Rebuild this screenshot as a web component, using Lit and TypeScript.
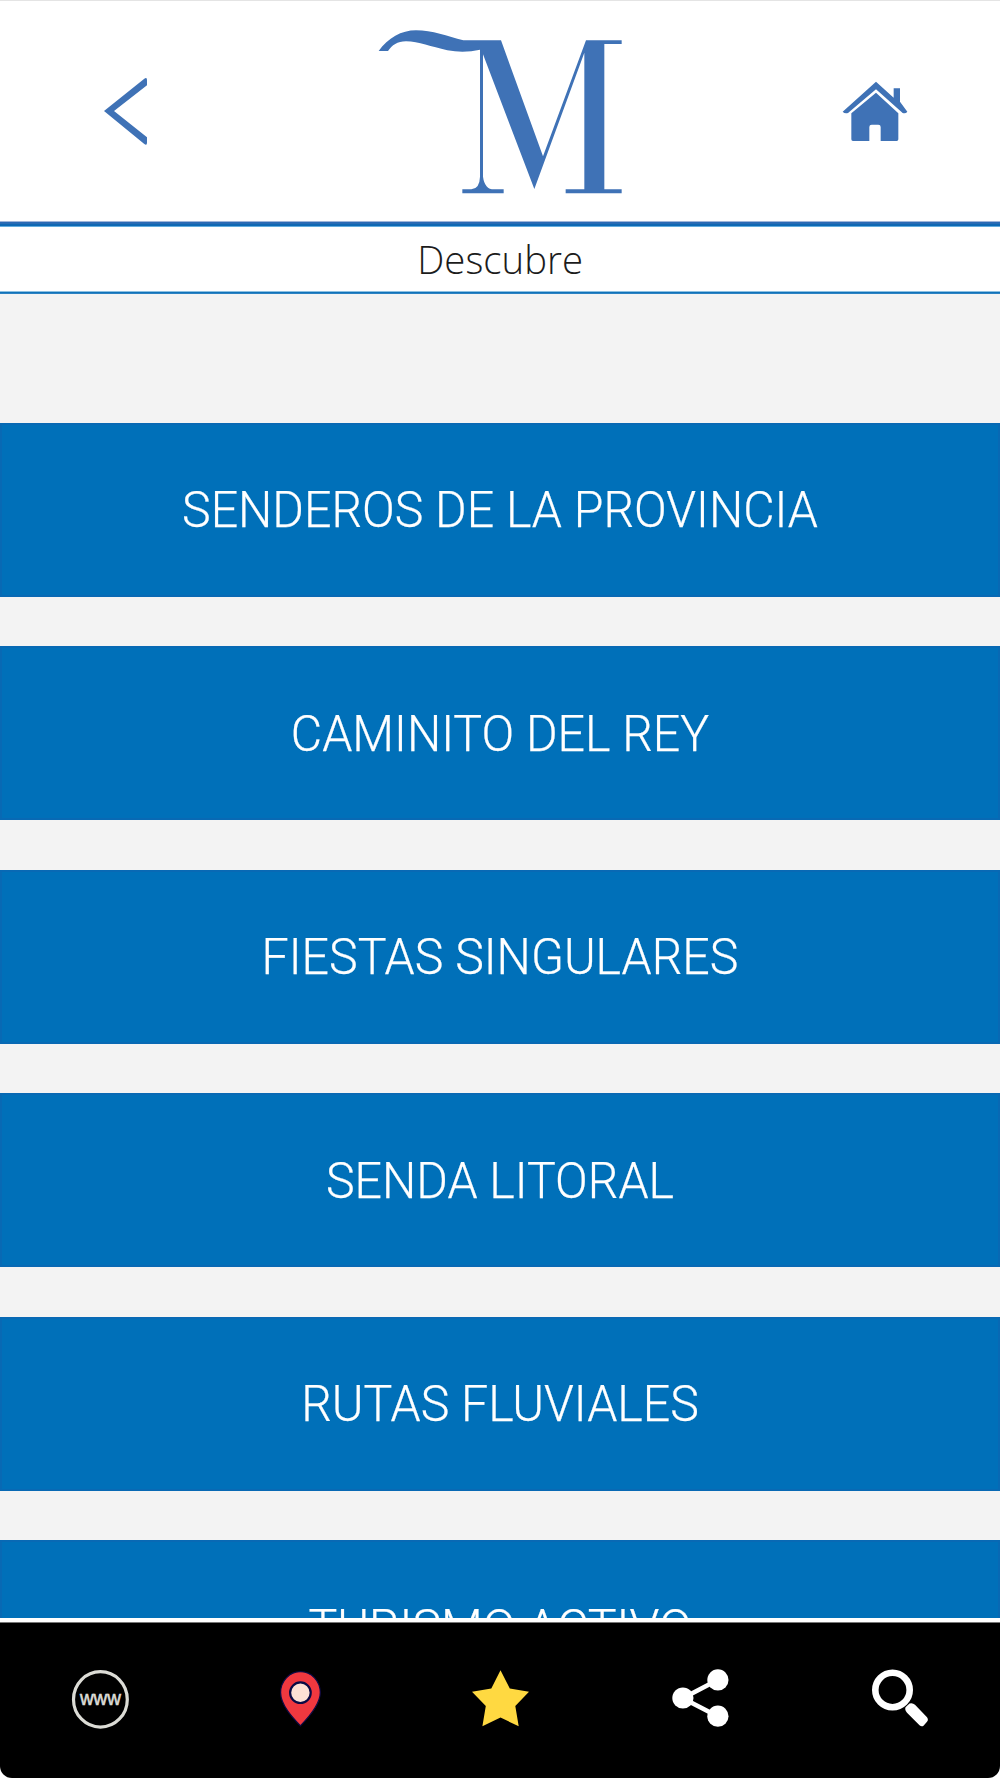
import { LitElement, html, css, svg } from "lit";
import { customElement } from "lit/decorators.js";

const SECTIONS = [
  "SENDEROS DE LA PROVINCIA",
  "CAMINITO DEL REY",
  "FIESTAS SINGULARES",
  "SENDA LITORAL",
  "RUTAS FLUVIALES",
  "TURISMO ACTIVO",
];

@customElement("app-header")
class AppHeader extends LitElement {
  static styles = css`
    :host {
      display: block;
    }
    .bar {
      box-sizing: border-box;
      height: 221px;
      display: grid;
      grid-template-columns: 1fr 2fr 1fr;
      justify-items: center;
      align-items: center;
      border-top: 1px solid #e4e4e4;
      padding-bottom: 2px;
      background: #fff;
    }
    svg {
      display: block;
      fill: #3f72b6;
    }
    .title {
      box-sizing: border-box;
      height: 73px;
      margin: 0;
      padding-bottom: 1px;
      display: flex;
      justify-content: center;
      align-items: center;
      border-top: 6px solid #1e6bb5;
      border-image: linear-gradient(#9fb5da 0 1px, #2a6bb5 1px 3px, #0f69b4 3px 5px, #64addf 5px 6px) 6 0 0 0;
      background: #fff;
      color: #1c1c1c;
      font: 300 39.4px/1 "Open Sans", sans-serif;
    }
    .label {
      display: block;
      transform: scaleX(0.974);
    }
    .rule {
      height: 3px;
      margin-top: -3px;
      position: relative;
      background: linear-gradient(#8cc0e2 0 1px, #0f72b9 1px 2px, #2c82c2 2px 3px);
    }
  `;
  render() {
    return html`
      <header class="bar">
        <svg width="90" height="100" viewBox="0 0 270 300">
          <path d="M72 153 192 57Q201 50 201 60V76L102 153 201 232V248Q201 258 192 251Z" />
        </svg>
        <svg width="280" height="200" viewBox="0 0 840 600">
          <path d="M56 123C84 84 124 61 168 61C217 61 262 79 310 91H423L549 439L678 91H785V102H733V538H785V550H617V538H673V128L523 537L369 133V500Q374 538 402 538H431V550H307V538H334Q359 536 360 500V119Q313 130 262 121C213 110 177 95 138 94C112 94 96 106 84 123Z" />
        </svg>
        <svg width="110" height="100" viewBox="0 0 330 300">
          <path d="M68 155 168 65 221 113V85H240V125L262 155Q257 162 248 159L168 88 84 159Q74 162 68 155Z" />
          <path d="M168 98 235 160V238Q235 243 230 243H182V201Q182 194 175 194H155Q148 194 148 201V243H99Q94 243 94 238V160Z" />
        </svg>
      </header>
      <h1 class="title"><span class="label">Descubre</span></h1>
      <div class="rule"></div>
    `;
  }
}

@customElement("app-tabbar")
class AppTabbar extends LitElement {
  static styles = css`
    :host {
      display: block;
      background: #fff;
    }
    .bar {
      box-sizing: border-box;
      height: 156px;
      padding-bottom: 4px;
      display: grid;
      grid-template-columns: repeat(5, 1fr);
      place-items: center;
      background: #000;
      border-top: 1px solid #777;
      border-radius: 0 0 12px 12px;
    }
    svg {
      display: block;
    }
    .www {
      font: 400 20px "Liberation Sans", sans-serif;
      fill: #dcdcd6;
      stroke: #dcdcd6;
      stroke-width: 0.6px;
    }
  `;
  private icon(body: unknown) {
    return html`<svg width="70" height="70" viewBox="0 0 70 70">${body}</svg>`;
  }
  render() {
    return html`
      <nav class="bar">
        ${this.icon(svg`
          <ellipse cx="35.4" cy="35.4" rx="26.9" ry="27.7" fill="none" stroke="#dcdcd6" stroke-width="3.2" />
          <text class="www" x="35.4" y="41" text-anchor="middle" textLength="41" lengthAdjust="spacingAndGlyphs">www</text>
        `)}
        ${this.icon(svg`
          <path d="M35.4 61.8C28 54 15.6 41 15.6 28.5A19.85 20.8 0 0 1 55.3 28.5C55.3 41 43 54 35.4 61.8Z" fill="#f0383f" stroke="#0b0b45" stroke-width="1.2" />
          <circle cx="35.4" cy="28.7" r="10.3" fill="#fee1d5" stroke="#0b0b45" stroke-width="2.2" />
        `)}
        ${this.icon(svg`
          <path d="M35.5 6.3 44.8 24.5 64 27.8 50.3 42 53.7 62.3 35.5 53.5 17.4 62.3 20.8 42 7 27.8 26.3 24.5Z" fill="#ffd941" />
        `)}
        ${this.icon(svg`
          <path d="M52.6 16 17.8 34.2 52.6 52.2" fill="none" stroke="#fff" stroke-width="4.6" />
          <g fill="#fff">
            <circle cx="52.9" cy="15.9" r="10.6" />
            <circle cx="17.9" cy="34" r="10.6" />
            <circle cx="52.9" cy="52.2" r="10.6" />
          </g>
        `)}
        ${this.icon(svg`
          <circle cx="27.5" cy="26" r="17.2" fill="none" stroke="#fff" stroke-width="6.6" />
          <path d="M40.5 43.2 44.5 39.5Q47.5 38.5 50 40.7L62 53.2Q63.8 55.7 62 57.7L58.5 61.7Q56.5 63.2 54.5 61.2L42 48.7Q39.5 45.7 40.5 43.2Z" fill="#fff" />
        `)}
      </nav>
    `;
  }
}

@customElement("app-root")
class AppRoot extends LitElement {
  static styles = css`
    :host {
      display: flex;
      flex-direction: column;
      height: 1778px;
      overflow: hidden;
      background: #f3f3f3;
    }
    .list {
      flex: 1;
      min-height: 0;
      overflow: hidden;
      box-sizing: border-box;
      padding-top: 129px;
      display: flex;
      flex-direction: column;
      gap: 49.9px;
      border-bottom: 4px solid #fff;
    }
    .item {
      box-sizing: border-box;
      flex: 0 0 173.6px;
      width: 100%;
      padding: 1px 0 0;
      border: 0;
      box-shadow: inset 0 0 0 2px #0869b4;
      background: #0070b9;
      color: #fff;
      font: 300 50px/1 Roboto, sans-serif;
      text-align: center;
    }
    .label {
      display: block;
      transform: scaleX(0.965);
      -webkit-text-stroke: 0.25px #fff;
    }
  `;
  render() {
    return html`
      <app-header></app-header>
      <main class="list">
        ${SECTIONS.map((name) => html`<button class="item"><span class="label">${name}</span></button>`)}
      </main>
      <app-tabbar></app-tabbar>
    `;
  }
}
